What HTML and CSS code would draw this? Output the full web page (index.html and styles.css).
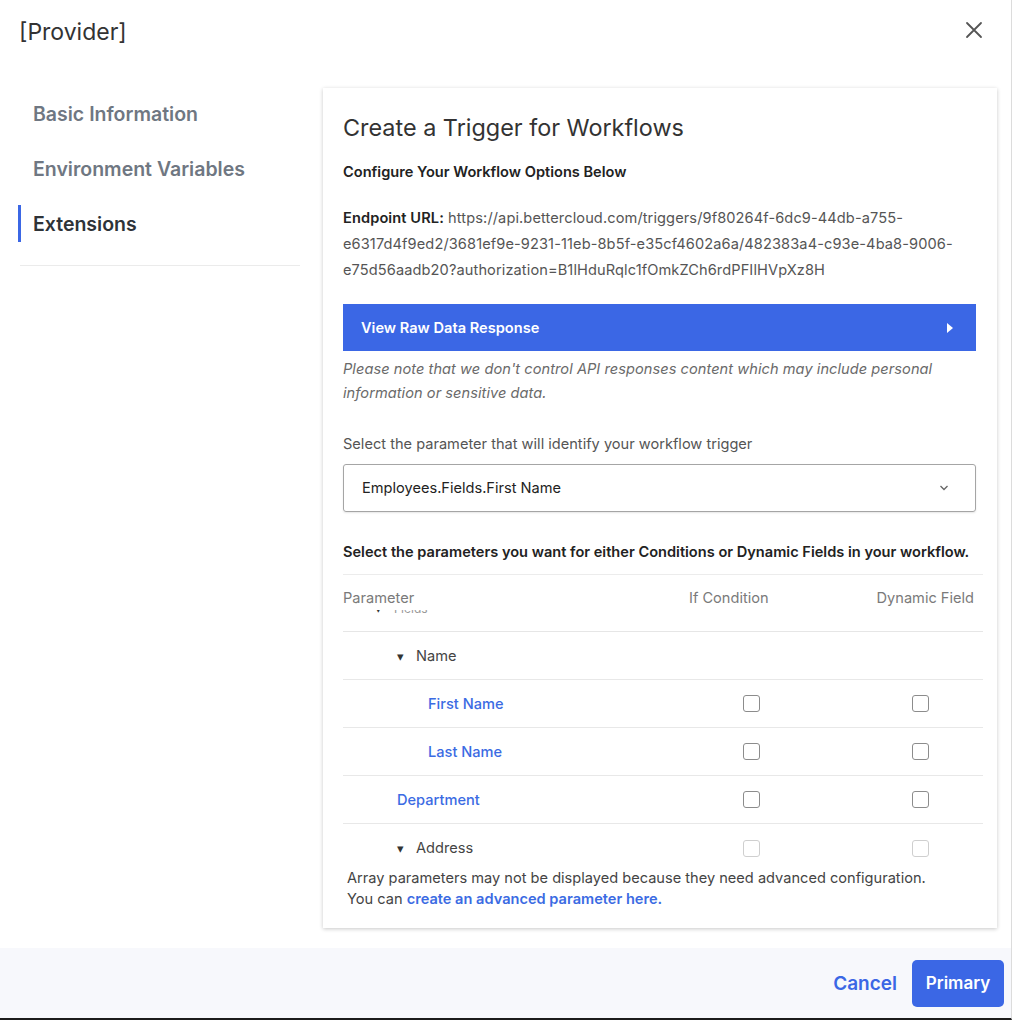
FILE: index.html
```html
<!DOCTYPE html>
<html lang="en">
<head>
    <meta charset="UTF-8">
    <title>[Provider]</title>
    <link rel="stylesheet" href="styles.css">
</head>
<body>
    <div class="modal">
        <div class="modal-header">
            <h1 class="modal-title">[Provider]</h1>
            <button class="close-btn" aria-label="Close">
                <svg width="18" height="18" viewBox="0 0 18 18"><path d="M2 2L16 16M16 2L2 16" stroke="#555" stroke-width="1.8" stroke-linecap="round"/></svg>
            </button>
        </div>

        <div class="modal-body">
            <nav class="side-nav">
                <a href="#basic" class="nav-link">Basic Information</a>
                <a href="#env" class="nav-link">Environment Variables</a>
                <a href="#ext" class="nav-link active">Extensions</a>
                <div class="nav-divider"></div>
            </nav>

            <div class="card">
                <h2 class="card-title">Create a Trigger for Workflows</h2>
                <p class="subhead">Configure Your Workflow Options Below</p>
                <p class="endpoint"><b>Endpoint URL:</b> https://api.bettercloud.com/triggers/9f80264f-6dc9-44db-a755-e6317d4f9ed2/3681ef9e-9231-11eb-8b5f-e35cf4602a6a/482383a4-c93e-4ba8-9006-e75d56aadb20?authorization=B1lHduRqlc1fOmkZCh6rdPFIlHVpXz8H</p>

                <button class="raw-bar">
                    <span>View Raw Data Response</span>
                    <svg width="8" height="12" viewBox="0 0 8 12"><path d="M1 1L7 6L1 11Z" fill="#fff"/></svg>
                </button>
                <p class="note">Please note that we don't control API responses content which may include personal information or sensitive data.</p>

                <p class="label">Select the parameter that will identify your workflow trigger</p>
                <div class="select">
                    <span>Employees.Fields.First Name</span>
                    <svg width="10" height="6" viewBox="0 0 10 6"><path d="M1.5 1L5 4.5L8.5 1" stroke="#666" stroke-width="1.3" fill="none"/></svg>
                </div>

                <p class="label strong">Select the parameters you want for either Conditions or Dynamic Fields in your workflow.</p>

                <div class="params">
                    <div class="params-head">
                        <div class="head-row">
                            <span>Parameter</span>
                            <span class="col-if">If Condition</span>
                            <span class="col-dyn">Dynamic Field</span>
                        </div>
                        <div class="peek"><span class="peek-text"><span class="caret">▾</span>Fields</span></div>
                    </div>
                    <div class="params-body">
                        <div class="row">
                            <span class="cell lvl2"><span class="caret">▾</span>Name</span>
                            <span></span><span></span>
                        </div>
                        <div class="row">
                            <span class="cell lvl3 link">First Name</span>
                            <span class="box-cell if"><span class="box"></span></span>
                            <span class="box-cell dyn"><span class="box"></span></span>
                        </div>
                        <div class="row">
                            <span class="cell lvl3 link">Last Name</span>
                            <span class="box-cell if"><span class="box"></span></span>
                            <span class="box-cell dyn"><span class="box"></span></span>
                        </div>
                        <div class="row">
                            <span class="cell lvl2 link">Department</span>
                            <span class="box-cell if"><span class="box"></span></span>
                            <span class="box-cell dyn"><span class="box"></span></span>
                        </div>
                        <div class="row last">
                            <span class="cell lvl2"><span class="caret">▾</span>Address</span>
                            <span class="box-cell if"><span class="box faded"></span></span>
                            <span class="box-cell dyn"><span class="box faded"></span></span>
                        </div>
                    </div>
                </div>

                <p class="array-note">Array parameters may not be displayed because they need advanced configuration.<br>You can <a href="#advanced">create an advanced parameter here.</a></p>
            </div>
        </div>

        <div class="modal-footer">
            <button class="btn-cancel">Cancel</button>
            <button class="btn-primary">Primary</button>
        </div>
    </div>
</body>
</html>
```

FILE: styles.css
```css
body {
    margin: 0;
    padding: 0;
    background: #fff;
    font-family: Inter, 'Noto Sans', sans-serif;
    color: #333;
}
.modal {
    width: 1011px;
    height: 1018px;
    border-right: 1px solid #dcdcdc;
    border-bottom: 2px solid #1c1c1c;
    display: flex;
    flex-direction: column;
}
.modal-header {
    height: 64px;
    padding: 0 28px 0 19px;
    display: flex;
    align-items: center;
    justify-content: space-between;
    flex-shrink: 0;
}
.modal-title {
    margin: 0;
    font-size: 23px;
    font-weight: 400;
    color: #333;
}
.close-btn {
    background: none;
    border: none;
    padding: 0;
    cursor: pointer;
    display: flex;
    margin-top: -4px;
}
.modal-body {
    flex: 1;
    display: flex;
    padding-top: 24px;
    background: #fff;
}
.side-nav {
    width: 282px;
    margin-left: 18px;
    padding-top: 7px;
    display: flex;
    flex-direction: column;
}
.nav-link {
    height: 37px;
    margin-bottom: 18px;
    padding-left: 12px;
    border-left: 3px solid transparent;
    display: flex;
    align-items: center;
    text-decoration: none;
    font-size: 19.5px;
    font-weight: 600;
    color: #6f7782;
}
.nav-link.active {
    border-left-color: #3b67e5;
    color: #2e3338;
}
.nav-divider {
    margin: 5px 0 0 2px;
    height: 1px;
    background: #ebebeb;
}
.card {
    width: 633px;
    height: 815px;
    margin-left: 23px;
    padding: 25px 21px 0 20px;
    background: #fff;
    box-shadow: 0 1px 4px rgba(0, 0, 0, 0.22);
    font-size: 14.6px;
}
.card-title {
    margin: 0;
    font-size: 23.4px;
    line-height: 30px;
    font-weight: 400;
    color: #333;
}
.subhead {
    margin: 19px 0 0;
    line-height: 20px;
    font-weight: 600;
    color: #222;
}
.endpoint {
    margin: 23px 0 0;
    line-height: 26px;
    color: #555;
    letter-spacing: 0.1px;
}
.endpoint b {
    color: #222;
    font-weight: 600;
}
.raw-bar {
    margin-top: 21px;
    width: 100%;
    height: 47px;
    border: none;
    background: #3b67e5;
    color: #fff;
    font-family: inherit;
    font-size: 14.6px;
    font-weight: 600;
    padding: 0 22px 0 18px;
    display: flex;
    align-items: center;
    justify-content: space-between;
}
.note {
    margin: 6px 0 0;
    line-height: 24px;
    font-style: italic;
    color: #6a6a6a;
    letter-spacing: 0.05px;
}
.label {
    margin: 29px 0 0;
    line-height: 20px;
    color: #555;
}
.label.strong {
    margin-top: 30px;
    font-weight: 600;
    color: #222;
}
.select {
    margin-top: 10px;
    height: 46px;
    border: 1px solid #a5a5a5;
    border-radius: 3px;
    box-shadow: 0 1px 2px rgba(0, 0, 0, 0.1);
    padding: 0 26px 0 18px;
    display: flex;
    align-items: center;
    justify-content: space-between;
    color: #222;
}
.params {
    margin-top: 12px;
    width: 640px;
}
.params-head {
    height: 58px;
    border-top: 1px solid #ececec;
    border-bottom: 1px solid #e6e6e6;
    box-sizing: border-box;
}
.head-row {
    display: grid;
    grid-template-columns: 345px 170px 125px;
    padding-top: 13px;
    line-height: 20px;
    color: #7a7a7a;
}
.head-row .col-if {
    padding-left: 1px;
}
.head-row .col-dyn {
    text-align: right;
    padding-right: 9px;
    white-space: nowrap;
}
.peek {
    height: 6px;
    margin-top: 2px;
    overflow: hidden;
    padding-left: 32px;
    font-size: 12px;
    color: #999;
}
.peek-text {
    display: block;
    margin-top: -10px;
    line-height: 16px;
}
.params-body {
    height: 234px;
    overflow: hidden;
}
.row {
    height: 48px;
    display: grid;
    grid-template-columns: 345px 170px 125px;
    align-items: center;
    border-bottom: 1px solid #e8e8e8;
    box-sizing: border-box;
}
.row.last {
    border-bottom: none;
}
.cell {
    color: #444;
    display: flex;
    align-items: center;
}
.cell.lvl2 {
    padding-left: 54px;
}
.cell.lvl3 {
    padding-left: 85px;
}
.caret {
    font-size: 13px;
    color: #333;
    margin-right: 12px;
}
.link {
    color: #3b6be3;
    font-weight: 500;
}
.box-cell.if {
    padding-left: 55px;
}
.box-cell.dyn {
    padding-left: 54px;
}
.box {
    display: block;
    width: 15px;
    height: 15px;
    border: 1.5px solid #8c8c8c;
    border-radius: 3px;
}
.box.faded {
    border-color: #cfcfcf;
}
.array-note {
    margin: 2px 0 0 4px;
    line-height: 21px;
    color: #444;
}
.array-note a {
    color: #3b6be3;
    font-weight: 600;
    text-decoration: none;
}
.modal-footer {
    height: 70px;
    flex-shrink: 0;
    background: #f7f8fc;
    display: flex;
    align-items: center;
    justify-content: flex-end;
    padding-right: 7px;
    gap: 15px;
}
.btn-cancel {
    background: none;
    border: none;
    font-family: inherit;
    font-size: 19px;
    font-weight: 600;
    color: #3b67e5;
    padding: 0;
}
.btn-primary {
    width: 92px;
    height: 47px;
    border: none;
    border-radius: 5px;
    background: #3b67e5;
    color: #fff;
    font-family: inherit;
    font-size: 17px;
    font-weight: 600;
}
```
